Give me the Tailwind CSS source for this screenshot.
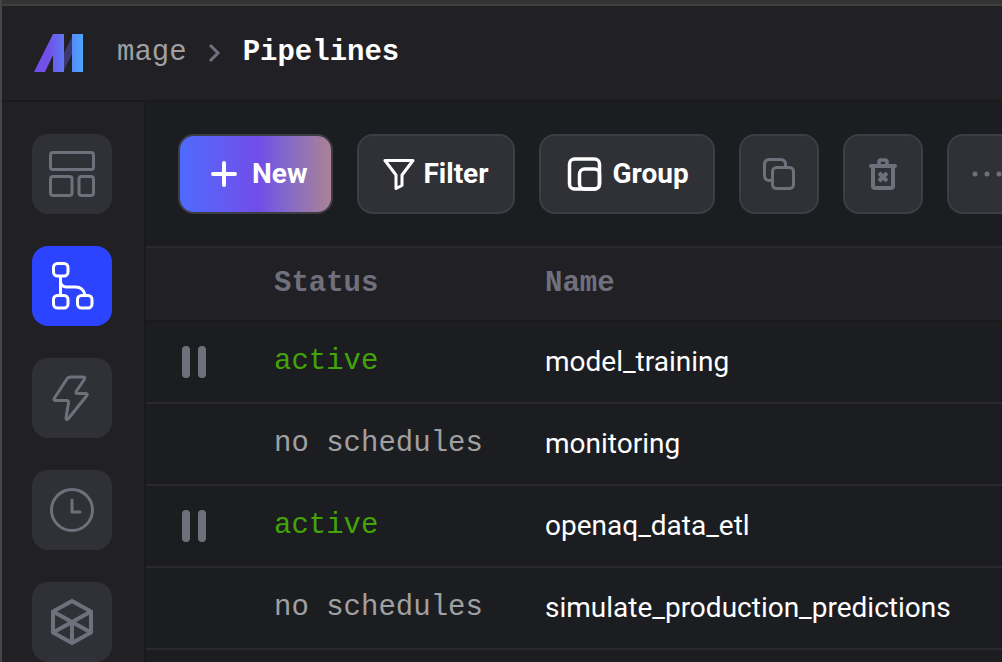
<!DOCTYPE html>
<html lang="en">
<head>
<meta charset="utf-8">
<meta name="viewport" content="width=device-width, initial-scale=1">
<title>Mage - Pipelines</title>
<script src="https://cdn.jsdelivr.net/npm/@tailwindcss/browser@4"></script>
</head>
<body class="flex h-screen flex-col overflow-hidden border-l-2 border-[#464649] bg-[#1c1d21] font-['Roboto',sans-serif] text-white">
<div class="h-1 shrink-0 bg-[#343434]"></div>
<header class="flex h-[98px] shrink-0 items-center border-t-2 border-b-2 border-t-[#3f3f3f] border-b-[#1a1a1b] bg-[#212025] pl-8 font-['Liberation_Mono',monospace] text-[29px] leading-8">
  <a href="#" aria-label="Mage home" class="mr-[33px]">
    <svg width="50" height="38" viewBox="0 0 50 38">
      <defs><linearGradient id="logo" x1="0" x2="50" y1="0" y2="0" gradientUnits="userSpaceOnUse"><stop offset=".28" stop-color="#7150ea"/><stop offset="1" stop-color="#4aa8ff"/></linearGradient></defs>
      <path fill="#3b3973" d="M30 19L38 3v17L30 36z"/>
      <path fill="url(#logo)" d="M0 38L19 0h11v38H19V21l-8 17zM38 0h11v38H38z"/>
    </svg>
  </a>
  <nav aria-label="Breadcrumb" class="flex items-center">
    <a href="#" class="text-[#a0a0a2]">mage</a>
    <svg class="mx-5" width="16" height="20" viewBox="0 0 16 20" fill="none" stroke="#70707c" stroke-width="3"><path d="M3 2l8 8-8 8"/></svg>
    <a href="#" class="font-bold">Pipelines</a>
  </nav>
</header>
<div class="flex min-h-0 flex-1">
  <nav aria-label="Main" class="flex w-36 shrink-0 flex-col items-start gap-8 border-r-2 border-[#1a1a1b] bg-[#212025] pt-8 pl-[30px]">
    <a href="#" aria-label="Overview" class="flex size-20 shrink-0 items-center justify-center rounded-2xl bg-[#303136]">
      <svg width="48" height="48" viewBox="0 0 48 48" fill="none" stroke="#70707c" stroke-width="3"><rect x="2.5" y="2.5" width="43" height="17" rx="2.5"/><rect x="2.5" y="26.5" width="21.5" height="19" rx="2.5"/><rect x="31" y="26.5" width="14.5" height="19" rx="2.5"/></svg>
    </a>
    <a href="#" aria-label="Pipelines" aria-current="page" class="flex size-20 shrink-0 items-center justify-center rounded-2xl bg-[#2c44ff]">
      <svg width="48" height="48" viewBox="0 0 48 48" fill="none" stroke="#fff" stroke-width="3"><rect x="5.5" y="1.500" width="14.500" height="12.500" rx="4"/><rect x="5.500" y="33.500" width="14.500" height="12.500" rx="4"/><rect x="29.500" y="33.500" width="14.500" height="12.500" rx="4"/><path d="M12.500 14v19.500M12.500 20q1 5 6 5h9q8 0 9.500 8.500"/></svg>
    </a>
    <a href="#" aria-label="Triggers" class="flex size-20 shrink-0 items-center justify-center rounded-2xl bg-[#303136]">
      <svg width="48" height="48" viewBox="0 0 48 48" fill="none" stroke="#70707c" stroke-width="3" stroke-linejoin="round"><path d="M23 3h12q2.500 0 1.500 2L28.500 17q-1.500 2.500 1 2.500h8q3 0 1 2.500L20.500 44.500q-2.500 2.500-2.500-.500L20.500 29q.500-2.500-2-2.500H8q-3 0-1.500-2.500L18.500 5.500q1.500-2.500 4.500-2.500z"/></svg>
    </a>
    <a href="#" aria-label="Runs" class="flex size-20 shrink-0 items-center justify-center rounded-2xl bg-[#303136]">
      <svg width="48" height="48" viewBox="0 0 48 48" fill="none" stroke="#70707c" stroke-width="3" stroke-linecap="round" stroke-linejoin="round"><circle cx="24" cy="24" r="20.500"/><path d="M24 14v12h8"/></svg>
    </a>
    <a href="#" aria-label="Global data products" class="flex size-20 shrink-0 items-center justify-center rounded-2xl bg-[#303136]">
      <svg width="48" height="48" viewBox="0 0 48 48" fill="none" stroke="#70707c" stroke-width="4" stroke-linejoin="round"><path d="M24 3L43 13.500v21L24 45 5 34.500v-21zM5 13.500l38 21M43 13.500l-38 21M24 24v21"/></svg>
    </a>
  </nav>
  <main class="min-w-0 flex-1 overflow-hidden">
    <div class="flex gap-6 px-8 py-8 text-[28px] leading-8 font-bold">
      <button class="flex h-20 shrink-0 items-center gap-2 rounded-2xl border-2 border-[#3d3e45] bg-linear-to-r from-[#4b6bff] via-[#704de8] via-52% to-[#ad8290] bg-origin-border px-6">
        <svg width="40" height="40" viewBox="0 0 40 40" fill="none" stroke="#fff" stroke-width="4" stroke-linecap="round"><path d="M20 9v22M9 20h22"/></svg>New
      </button>
      <button class="flex h-20 shrink-0 items-center gap-2 rounded-2xl border-2 border-[#3d3e45] bg-[#303136] px-6">
        <svg width="32" height="32" viewBox="0 0 32 32" fill="none" stroke="#fff" stroke-width="3" stroke-linejoin="round"><path d="M2 2.500h28L19 17v10.500l-6 3V17z"/></svg>Filter
      </button>
      <button class="flex h-20 shrink-0 items-center gap-2 rounded-2xl border-2 border-[#3d3e45] bg-[#303136] px-6">
        <svg width="40" height="40" viewBox="0 0 40 40" fill="none" stroke="#fff" stroke-width="3.500"><rect x="4.500" y="5" width="30" height="30" rx="5"/><rect x="14.500" y="15" width="20" height="20" rx="5"/></svg>Group
      </button>
      <button aria-label="Clone pipeline" class="flex size-20 shrink-0 items-center justify-center rounded-2xl border-2 border-[#3d3e45] bg-[#303136]">
        <svg width="32" height="32" viewBox="0 0 32 32" fill="none" stroke="#70707c" stroke-width="3"><rect x="9.500" y="9.500" width="21" height="21" rx="4"/><path d="M9.500 22.500h-3q-5 0-5-5v-11q0-5 5-5h11q5 0 5 5v3"/></svg>
      </button>
      <button aria-label="Delete pipeline" class="flex size-20 shrink-0 items-center justify-center rounded-2xl border-2 border-[#3d3e45] bg-[#303136]">
        <svg width="32" height="32" viewBox="0 0 32 32" fill="none" stroke="#70707c" stroke-width="4"><path d="M6 8v20q0 2 2 2h16q2 0 2-2V8M4 8h24" stroke-linecap="round"/><path d="M12 8V4q0-2 2-2h4q2 0 2 2v4" stroke-width="3.500"/><path d="M12 15l8 8M20 15l-8 8"/></svg>
      </button>
      <button aria-label="More actions" class="flex size-20 shrink-0 items-center justify-center rounded-2xl border-2 border-[#3d3e45] bg-[#303136]">
        <svg width="32" height="32" viewBox="0 0 32 32" fill="#70707c"><circle cx="4" cy="16" r="2.500"/><circle cx="16" cy="16" r="2.500"/><circle cx="28" cy="16" r="2.500"/></svg>
      </button>
    </div>
    <table class="w-full table-fixed border-collapse text-left text-[28px] leading-8">
      <colgroup><col class="w-32"><col class="w-[271px]"><col></colgroup>
      <thead class="bg-[#212025] font-['Liberation_Mono',monospace] text-[29px] text-[#70707c]">
        <tr class="h-[74px] border-t-2 border-b-2 border-t-[#29292e] border-b-[#1a1a1b]"><th aria-label="Toggle"></th><th>Status</th><th>Name</th></tr>
      </thead>
      <tbody>
        <tr class="h-[82px] border-b-2 border-[#29292e]">
          <td class="pl-9"><button aria-label="Pause model_training" class="flex gap-2"><span class="h-8 w-2 rounded-full bg-[#70707c]"></span><span class="h-8 w-2 rounded-full bg-[#70707c]"></span></button></td>
          <td class="font-['Liberation_Mono',monospace] text-[29px] text-[#42a408]">active</td><td>model_training</td>
        </tr>
        <tr class="h-[82px] border-b-2 border-[#29292e]">
          <td></td><td class="font-['Liberation_Mono',monospace] text-[29px] text-[#a0a0a2]">no schedules</td><td>monitoring</td>
        </tr>
        <tr class="h-[82px] border-b-2 border-[#29292e]">
          <td class="pl-9"><button aria-label="Pause openaq_data_etl" class="flex gap-2"><span class="h-8 w-2 rounded-full bg-[#70707c]"></span><span class="h-8 w-2 rounded-full bg-[#70707c]"></span></button></td>
          <td class="font-['Liberation_Mono',monospace] text-[29px] text-[#42a408]">active</td><td>openaq_data_etl</td>
        </tr>
        <tr class="h-[82px] border-b-2 border-[#29292e]">
          <td></td><td class="font-['Liberation_Mono',monospace] text-[29px] text-[#a0a0a2]">no schedules</td><td>simulate_production_predictions</td>
        </tr>
      </tbody>
    </table>
  </main>
</div>
</body>
</html>
